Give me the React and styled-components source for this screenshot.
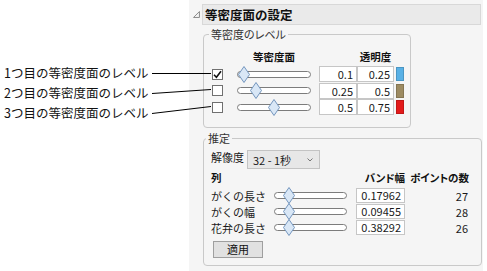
import React from "react";
import styled, { createGlobalStyle } from "styled-components";

const Global = createGlobalStyle`
  html, body { margin: 0; padding: 0; background: #ffffff; }
  body { font-family: "Noto Sans CJK JP", "Noto Sans", sans-serif; color: #1a1a1a; }
  * { box-sizing: border-box; }
`;

const Page = styled.div`
  position: relative;
  display: flex;
  width: 487px;
  height: 271px;
  overflow: hidden;
`;

const LabelColumn = styled.div`
  width: 189px;
  padding: 63px 0 0 4px;
  display: flex;
  flex-direction: column;
`;

const CalloutLabel = styled.div`
  font-size: 12.5px;
  line-height: 20px;
  height: 20px;
  white-space: nowrap;
  color: #111;
`;

const Leaders = styled.svg`
  position: absolute;
  left: 0;
  top: 0;
  pointer-events: none;
`;

const Panel = styled.div`
  width: 294px;
  height: 271px;
  background: #f5f5f5;
  padding: 4px 2px 0 3px;
`;

const HeaderRow = styled.div`
  display: flex;
  align-items: center;
  gap: 1px;
`;

const HeaderBox = styled.div`
  width: 281px;
  height: 21px;
  background: #eaeaea;
  border: 1px solid #d8d8d8;
  padding-left: 2px;
  font-size: 12.5px;
  font-weight: 700;
  line-height: 19px;
  color: #111;
`;

const Body = styled.div`
  padding-left: 11px;
  margin-top: 2px;
  display: flex;
  flex-direction: column;
`;

const Group = styled.fieldset`
  margin: ${(p) => p.$mt || 0}px 0 0 0;
  width: ${(p) => p.$w}px;
  border: 1px solid #c9c9c9;
  border-radius: 4px;
  padding: ${(p) => p.$pt}px 0 ${(p) => p.$pb}px ${(p) => p.$pl}px;
  min-width: 0;
`;

const Legend = styled.legend`
  font-size: 11px;
  line-height: 14px;
  padding: 0 2px;
  margin-left: ${(p) => p.$ml}px;
  color: #333;
  font-feature-settings: "palt";
`;

const LevelGrid = styled.div`
  display: grid;
  grid-template-columns: 25px 82px 38px 37px 10px;
  row-gap: 0.5px;
  align-items: center;
  margin-bottom: ${(p) => p.$mb || 0}px;
`;

const ColHead = styled.div`
  font-size: 10.5px;
  font-weight: 700;
  line-height: 14px;
  text-align: ${(p) => p.$align || "center"};
  grid-column: ${(p) => p.$col};
  white-space: nowrap;
  margin-right: ${(p) => p.$mr || 0}px;
  color: #111;
  font-feature-settings: "palt";
`;

const Check = styled.div`
  width: 11px;
  height: 11px;
  background: #fff;
  border: 1px solid #707070;
  display: flex;
  align-items: center;
  justify-content: center;
`;

const Track = styled.div`
  position: relative;
  width: ${(p) => p.$w}px;
  height: 7px;
  background: #fff;
  border: 1px solid #7c7c7c;
  border-radius: 4px;
`;

const Thumb = styled.svg`
  position: absolute;
  top: -6px;
  margin-left: -6px;
`;

const NumBox = styled.div`
  height: ${(p) => p.$h}px;
  background: #fff;
  border: 1px solid #c6c6c6;
  font-size: 11px;
  line-height: ${(p) => p.$h - 2}px;
  text-align: right;
  padding-right: 3px;
  color: #1a1a1a;
`;

const Swatch = styled.div`
  margin-left: 2px;
  width: 8px;
  height: 14px;
  background: ${(p) => p.$c};
  border: 1px solid rgba(0, 0, 0, 0.15);
`;

const ResRow = styled.div`
  display: flex;
  align-items: flex-start;
`;

const Text = styled.div`
  font-size: 11px;
  line-height: 14px;
  white-space: nowrap;
  color: #1a1a1a;
  text-align: ${(p) => p.$align || "left"};
  padding-right: ${(p) => p.$pr || 0}px;
`;

const Dropdown = styled.div`
  margin-left: 3px;
  width: 73px;
  height: 19px;
  background: #e7e7e7;
  border: 1px solid #c3c3c3;
  display: flex;
  align-items: center;
  justify-content: space-between;
  padding: 1px 6px 0 5px;
  font-size: 11px;
`;

const EstGrid = styled.div`
  display: grid;
  grid-template-columns: 63px 82px 49px 64px;
  row-gap: 1px;
  align-items: center;
  margin-top: ${(p) => p.$mt || 0}px;
  margin-bottom: ${(p) => p.$mb || 0}px;
`;

const ApplyButton = styled.button`
  margin: 5px 0 0 2px;
  width: 50px;
  height: 17px;
  padding: 0;
  background: #e1e1e1;
  border: 1px solid #9f9f9f;
  font-family: inherit;
  font-size: 11px;
  line-height: 15px;
  color: #111;
`;

function Slider({ w, pos }) {
  return (
    <Track $w={w}>
      <Thumb width="12" height="17" viewBox="0 0 12 17" style={{ left: pos - 1 }}>
        <polygon points="6,0.5 11.5,8.5 6,16.5 0.5,8.5" fill="#d9e7f6" stroke="#7395bd" strokeWidth="1" />
      </Thumb>
    </Track>
  );
}

function CheckBox({ checked }) {
  return (
    <Check>
      {checked && (
        <svg width="9" height="9" viewBox="0 0 9 9">
          <path d="M1 4.8 L3.4 7.2 L8 1.2" fill="none" stroke="#111" strokeWidth="1.6" />
        </svg>
      )}
    </Check>
  );
}

const levels = [
  { checked: true, pos: 7, a: "0.1", b: "0.25", c: "#59b1e6" },
  { checked: false, pos: 18.5, a: "0.25", b: "0.5", c: "#9d8b62" },
  { checked: false, pos: 37, a: "0.5", b: "0.75", c: "#e31b1b" },
];

const cols = [
  { name: "がくの長さ", bw: "0.17962", n: 27 },
  { name: "がくの幅", bw: "0.09455", n: 28 },
  { name: "花弁の長さ", bw: "0.38292", n: 26 },
];

export default function App() {
  return (
    <>
      <Global />
      <Page>
        <LabelColumn>
          <CalloutLabel>1つ目の等密度面のレベル</CalloutLabel>
          <CalloutLabel>2つ目の等密度面のレベル</CalloutLabel>
          <CalloutLabel>3つ目の等密度面のレベル</CalloutLabel>
        </LabelColumn>
        <Panel>
          <HeaderRow>
            <svg width="9" height="9" viewBox="0 0 9 9">
              <polygon points="7.5,1.5 7.5,7.5 1.5,7.5" fill="#f2f2f2" stroke="#8a8a8a" strokeWidth="1" />
            </svg>
            <HeaderBox>等密度面の設定</HeaderBox>
          </HeaderRow>
          <Body>
            <Group $w={208} $pt={9} $pb={12} $pl={8}>
              <Legend $ml={-3}>等密度のレベル</Legend>
              <LevelGrid $mb={2}>
                <ColHead $col="2" $mr={8}>等密度面</ColHead>
                <ColHead $col="4">透明度</ColHead>
              </LevelGrid>
              <LevelGrid>
                {levels.map((l, i) => (
                  <React.Fragment key={i}>
                    <CheckBox checked={l.checked} />
                    <Slider w={74} pos={l.pos} />
                    <NumBox $h={16}>{l.a}</NumBox>
                    <NumBox $h={16}>{l.b}</NumBox>
                    <Swatch $c={l.c} />
                  </React.Fragment>
                ))}
              </LevelGrid>
            </Group>
            <Group $w={279} $mt={3} $pt={5} $pb={6} $pl={7}>
              <Legend $ml={-5}>推定</Legend>
              <ResRow>
                <Text>解像度</Text>
                <Dropdown>
                  <span>32 - 1秒</span>
                  <svg width="6" height="4" viewBox="0 0 6 4">
                    <path d="M0.5 0.5 L3 3 L5.5 0.5" fill="none" stroke="#777" strokeWidth="1" />
                  </svg>
                </Dropdown>
              </ResRow>
              <EstGrid $mt={2} $mb={3}>
                <ColHead $col="1" $align="left">列</ColHead>
                <ColHead $col="3" $align="right">バンド幅</ColHead>
                <ColHead $col="4" $align="right">ポイントの数</ColHead>
              </EstGrid>
              <EstGrid>
                {cols.map((c) => (
                  <React.Fragment key={c.name}>
                    <Text>{c.name}</Text>
                    <Slider w={73} pos={15} />
                    <NumBox $h={15}>{c.bw}</NumBox>
                    <Text $align="right" $pr={1}>{c.n}</Text>
                  </React.Fragment>
                ))}
              </EstGrid>
              <ApplyButton>適用</ApplyButton>
            </Group>
          </Body>
        </Panel>
        <Leaders width="487" height="271" viewBox="0 0 487 271">
          <line x1="152" y1="73.5" x2="211" y2="73.5" stroke="#000" strokeWidth="1" />
          <line x1="152" y1="93.5" x2="211" y2="89.5" stroke="#000" strokeWidth="1" />
          <line x1="152" y1="113.5" x2="211" y2="106.5" stroke="#000" strokeWidth="1" />
        </Leaders>
      </Page>
    </>
  );
}
